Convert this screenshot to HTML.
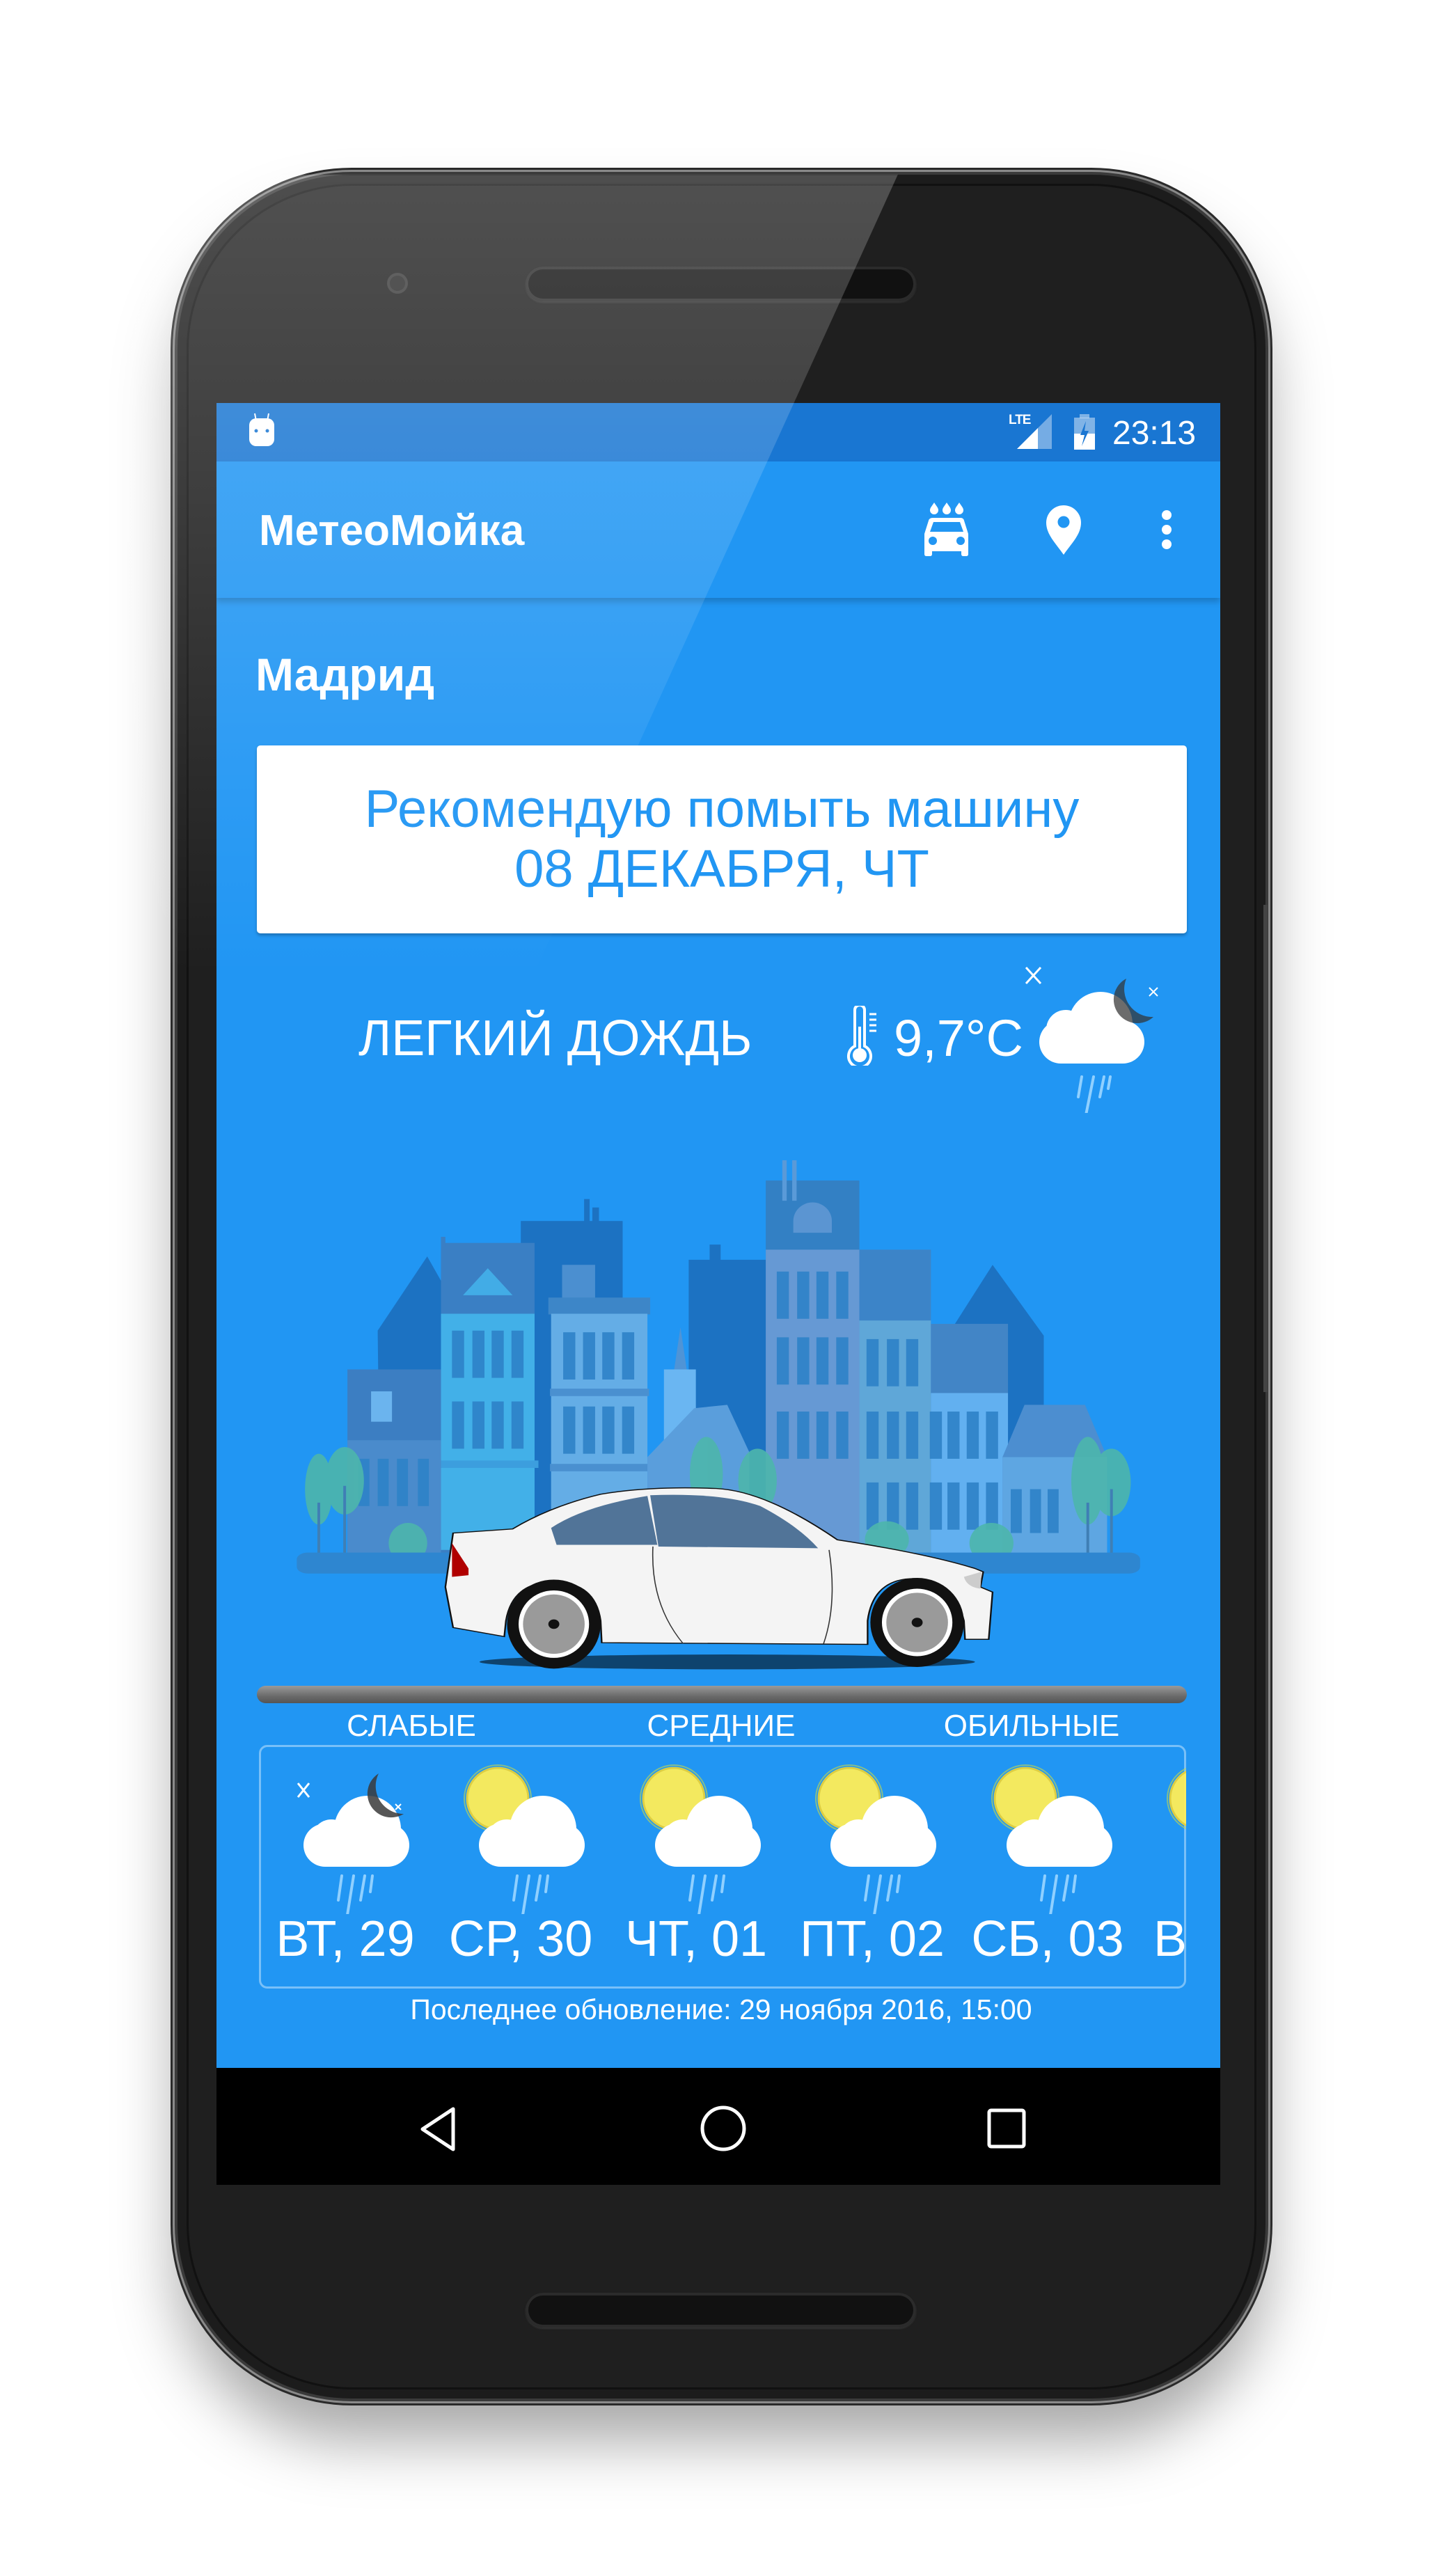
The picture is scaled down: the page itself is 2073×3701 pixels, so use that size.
<!DOCTYPE html>
<html><head><meta charset="utf-8">
<style>
*{margin:0;padding:0;box-sizing:border-box}
html,body{width:2073px;height:3701px;background:#fff;overflow:hidden;font-family:"Liberation Sans",Arial,sans-serif}
.abs{position:absolute}
#phone{left:255px;top:251px;width:1563px;height:3195px;border-radius:250px;background:#1c1c1c;
 box-shadow:0 0 0 4px #3a3a3a,0 0 0 7px #8a8a8a,0 0 0 10px #2a2a2a,0 60px 90px rgba(0,0,0,.35)}
#inner{left:268px;top:264px;width:1537px;height:3169px;border-radius:238px;background:#1f1f1f;box-shadow:inset 0 0 0 3px #111}
.speaker{width:561px;height:50px;border-radius:25px;background:#111;box-shadow:inset 0 0 0 4px #2b2b2b,0 2px 2px #333}
#screen{left:311px;top:579px;width:1442px;height:2392px;background:#2196F3;overflow:hidden}
#status{left:0;top:0;width:1442px;height:84px;background:#1976D2}
#toolbar{left:0;top:84px;width:1442px;height:196px;background:#2196F3;box-shadow:0 6px 8px rgba(0,0,0,.18)}
.w{color:#fff}
#card{left:58px;top:492px;width:1336px;height:270px;background:#fff;border-radius:5px;box-shadow:0 3px 4px rgba(0,0,0,.25);color:#2196F3;text-align:center;font-size:76px;line-height:86px;padding-top:49px}
#nav{left:311px;top:2971px;width:1442px;height:168px;background:#000}
#glare{left:0;top:0;width:2073px;height:3701px;clip-path:polygon(0 0,1404px 0,0 3085px);
 background:linear-gradient(to bottom,rgba(255,255,255,0) 0,rgba(255,255,255,0) 250px,rgba(255,255,255,.22) 252px,rgba(255,255,255,.14) 700px,rgba(255,255,255,.06) 1100px,rgba(255,255,255,0) 1400px);pointer-events:none}
.lbl{font-size:44px;color:#fff;top:2455px;width:400px;text-align:center}
.day{font-size:72px;color:#fff;top:2745px;width:260px;text-align:center}
</style></head><body>
<div id="phone" class="abs"></div>
<div id="inner" class="abs"></div>
<div class="abs speaker" style="left:755px;top:383px"></div>
<div class="abs" style="left:556px;top:392px;width:30px;height:30px;border-radius:50%;background:#2a2a2a;box-shadow:inset 0 0 0 4px #3a3a3a"></div>
<div class="abs speaker" style="left:755px;top:3294px"></div>
<div class="abs" style="left:1815px;top:1300px;width:6px;height:700px;background:#444"></div>

<div id="screen" class="abs">
 <div id="status" class="abs">
  <svg class="abs" style="left:45px;top:14px" width="40" height="50" viewBox="0 0 40 50"><line x1="10" y1="1" x2="12" y2="12" stroke="#fff" stroke-width="2"/><line x1="30" y1="1" x2="28" y2="12" stroke="#fff" stroke-width="2"/><rect x="2" y="8" width="36" height="40" rx="10" fill="#fff"/><circle cx="12" cy="26" r="2.5" fill="#1976D2"/><circle cx="28" cy="26" r="2.5" fill="#1976D2"/></svg>
  <div class="abs w" style="left:1138px;top:14px;font-size:19px;font-weight:bold;letter-spacing:-1px">LTE</div>
  <svg class="abs" style="left:1150px;top:16px" width="52" height="52" viewBox="0 0 52 52"><polygon points="0,50 50,0 50,50" fill="#fff" opacity=".4"/><polygon points="0,50 30,20 30,50" fill="#fff"/></svg>
  <svg class="abs" style="left:1230px;top:16px" width="34" height="52" viewBox="0 0 34 52"><rect x="10" y="0" width="14" height="6" fill="#fff" opacity=".45"/><rect x="2" y="5" width="30" height="46" fill="#fff" opacity=".45"/><rect x="2" y="28" width="30" height="23" fill="#fff"/><polygon points="19,10 11,30 17,30 13,46 23,24 17,24" fill="#1976D2"/></svg>
  <div class="abs w" style="left:1287px;top:16px;font-size:48px">23:13</div>
 </div>
 <div id="toolbar" class="abs">
  <div class="abs w" style="left:61px;top:64px;font-size:62px;font-weight:bold">МетеоМойка</div>
  <svg class="abs" style="left:1017px;top:59px" width="64" height="77" viewBox="0 0 64 77">
   <path d="M14 0 C10 6 8 8 8 11 A6 6 0 0 0 20 11 C20 8 18 6 14 0Z M32 0 C28 6 26 8 26 11 A6 6 0 0 0 38 11 C38 8 36 6 32 0Z M50 0 C46 6 44 8 44 11 A6 6 0 0 0 56 11 C56 8 54 6 50 0Z" fill="#fff"/>
   <path d="M12 22 H52 Q56 22 57 26 L63 45 V74 Q63 77 60 77 H56 Q53 77 53 74 V70 H11 V74 Q11 77 8 77 H3 Q0 77 0 74 V45 L6 26 Q7 22 12 22Z M13 28 L8 42 H56 L51 28Z" fill="#fff" fill-rule="evenodd"/>
   <circle cx="12" cy="55" r="6" fill="#2196F3"/><circle cx="52" cy="55" r="6" fill="#2196F3"/>
  </svg>
  <svg class="abs" style="left:1192px;top:63px" width="50" height="71" viewBox="0 0 50 71"><path d="M25 0 A25 25 0 0 1 50 25 C50 42 36 55 25 71 C14 55 0 42 0 25 A25 25 0 0 1 25 0Z" fill="#fff"/><circle cx="25" cy="24" r="8.5" fill="#2196F3"/></svg>
  <svg class="abs" style="left:1357px;top:70px" width="16" height="60" viewBox="0 0 16 60"><circle cx="8" cy="7" r="7" fill="#fff"/><circle cx="8" cy="28" r="7" fill="#fff"/><circle cx="8" cy="49" r="7" fill="#fff"/></svg>
 </div>
 <div class="abs w" style="left:56px;top:352px;font-size:66px;font-weight:bold">Мадрид</div>
 <div id="card" class="abs">Рекомендую помыть машину<br>08 ДЕКАБРЯ, ЧТ</div>
 <div class="abs w" style="left:204px;top:872px;font-size:72px">ЛЕГКИЙ ДОЖДЬ</div>
 <svg class="abs" style="left:905px;top:866px" width="50" height="86" viewBox="0 0 50 86"><path d="M12 4 A7 7 0 0 1 26 4 V56 A16 16 0 1 1 12 56Z" transform="translate(0,2)" fill="none" stroke="#fff" stroke-width="4"/><rect x="17" y="30" width="4" height="35" fill="#fff"/><circle cx="19" cy="71" r="10" fill="#fff"/><path d="M33 12h10M33 20h10M33 28h10M33 36h10" stroke="#fff" stroke-width="3"/></svg>
 <div class="abs w" style="left:973px;top:870px;font-size:74px">9,7°C</div>
 <svg class="abs" style="left:1160px;top:800px" width="260" height="220" viewBox="0 0 260 220">
  <g fill="#fff"><rect x="22" y="87" width="151" height="62" rx="31"/><circle cx="110" cy="92" r="46"/><circle cx="60" cy="100" r="28"/></g>
  <path d="M147 27 A34 34 0 1 0 186 82 A40 40 0 0 1 147 27Z" fill="#333" opacity=".72"/>
  <path d="M3 11 L24 34 M24 11 L3 34" stroke="#fff" stroke-width="3"/>
  <path d="M180 40 L192 52 M192 40 L180 52" stroke="#fff" stroke-width="2"/>
  <g stroke="#90D0FF" stroke-width="4" stroke-linecap="round"><line x1="88" y1="228" x2="100" y2="168"/><line x1="78" y1="197" x2="83" y2="168"/><line x1="109" y1="197" x2="115" y2="168"/><line x1="121" y1="185" x2="124" y2="168"/></g>
 </svg>
</div>

<svg class="abs" style="left:420px;top:1650px" width="1240" height="760" viewBox="0 0 1568 1568" preserveAspectRatio="none">
 <g fill="#1C72C2">
  <rect x="415" y="215" width="185" height="1000"/><rect x="530" y="150" width="10" height="80"/><rect x="545" y="175" width="12" height="50"/>
  <rect x="720" y="330" width="150" height="880"/><rect x="758" y="285" width="20" height="50"/>
  <polygon points="155,540 245,320 290,450 290,1200 160,1200"/>
  <polygon points="1190,555 1272,345 1365,555 1365,1200 1190,1200"/>
 </g>
 <rect x="270" y="280" width="170" height="920" fill="#3A7FC4"/><rect x="270" y="262" width="8" height="30" fill="#3A7FC4"/>
 <polygon points="310,435 355,355 400,435" fill="#42ACE6"/>
 <rect x="270" y="490" width="170" height="700" fill="#42B0E8"/>
 <rect x="262" y="925" width="185" height="22" fill="#3C9EDE"/>
 <rect x="100" y="655" width="170" height="545" fill="#3C7EC2"/>
 <rect x="100" y="865" width="170" height="335" fill="#4A8BCC"/>
 <rect x="143" y="720" width="38" height="90" fill="#6BB4EE"/>
 <rect x="490" y="345" width="60" height="100" fill="#4B8FD0"/>
 <rect x="465" y="442" width="185" height="50" fill="#3D86C8"/>
 <rect x="470" y="490" width="175" height="700" fill="#64ADE6"/>
 <rect x="468" y="712" width="180" height="22" fill="#4A90D0"/><rect x="468" y="935" width="180" height="22" fill="#4A90D0"/>
 <rect x="860" y="95" width="170" height="1100" fill="#3380C4"/><rect x="890" y="35" width="8" height="120" fill="#5A9AD8"/><rect x="908" y="35" width="8" height="120" fill="#5A9AD8"/>
 <path d="M910 250 V215 A35 55 0 0 1 980 215 V250Z" fill="#5B95D2"/>
 <rect x="860" y="300" width="170" height="900" fill="#6699D4"/>
 <rect x="1030" y="300" width="130" height="900" fill="#3C84C8"/><rect x="1030" y="510" width="130" height="690" fill="#5FA7D8"/>
 <rect x="1160" y="520" width="140" height="680" fill="#4285C6"/><rect x="1160" y="725" width="140" height="475" fill="#62B0F0"/>
 <polygon points="675,860 705,530 735,860" fill="#4F94D6"/><rect x="675" y="655" width="58" height="210" fill="#6AB6F2"/>
 <polygon points="645,915 730,770 790,760 830,900 830,1200 645,1200" fill="#5A9EDC"/>
 <polygon points="1290,915 1330,760 1440,760 1480,915 1480,1200 1290,1200" fill="#4C8ED0"/><rect x="1290" y="915" width="190" height="285" fill="#5EA6E2"/>
 <g fill="#2E82C8" opacity=".9">
  <path d="M290 540h22v140h-22zM327 540h22v140h-22zM362 540h22v140h-22zM398 540h22v140h-22zM290 750h22v140h-22zM327 750h22v140h-22zM362 750h22v140h-22zM398 750h22v140h-22z"/>
  <path d="M492 545h22v140h-22zM528 545h22v140h-22zM563 545h22v140h-22zM599 545h22v140h-22zM492 765h22v140h-22zM528 765h22v140h-22zM563 765h22v140h-22zM599 765h22v140h-22z"/>
  <path d="M880 365h22v140h-22zM917 365h22v140h-22zM952 365h22v140h-22zM988 365h22v140h-22zM880 560h22v140h-22zM917 560h22v140h-22zM952 560h22v140h-22zM988 560h22v140h-22zM880 780h22v140h-22zM917 780h22v140h-22zM952 780h22v140h-22zM988 780h22v140h-22z"/>
  <path d="M1043 565h22v140h-22zM1080 565h22v140h-22zM1115 565h22v140h-22zM1043 780h22v140h-22zM1080 780h22v140h-22zM1115 780h22v140h-22zM1043 990h22v140h-22zM1080 990h22v140h-22zM1115 990h22v140h-22z"/>
  <path d="M1158 780h22v140h-22zM1190 780h22v140h-22zM1225 780h22v140h-22zM1260 780h22v140h-22zM1158 990h22v140h-22zM1190 990h22v140h-22zM1225 990h22v140h-22zM1260 990h22v140h-22z"/>
  <path d="M120 920h20v140h-20zM155 920h20v140h-20zM190 920h20v140h-20zM228 920h20v140h-20zM1305 1010h20v130h-20zM1340 1010h20v130h-20zM1372 1010h20v130h-20z"/>
 </g>
 <g fill="#4DB6AC" opacity=".9">
  <ellipse cx="48" cy="1010" rx="25" ry="105"/><ellipse cx="95" cy="985" rx="35" ry="100"/>
  <ellipse cx="752" cy="965" rx="30" ry="110"/><ellipse cx="845" cy="985" rx="35" ry="95"/>
  <ellipse cx="1445" cy="985" rx="30" ry="130"/><ellipse cx="1488" cy="990" rx="35" ry="100"/>
  <ellipse cx="210" cy="1170" rx="35" ry="60"/><ellipse cx="1270" cy="1170" rx="40" ry="60"/><ellipse cx="1080" cy="1160" rx="40" ry="55"/>
 </g>
 <g stroke="#3F7FB5" stroke-width="5" fill="none"><path d="M48 1200V1050M95 1200V1000M1445 1200V1050M1488 1200V1010"/></g>
 <rect x="8" y="1198" width="1532" height="62" rx="20" fill="#2E86D0"/>
 <ellipse cx="790" cy="1522" rx="450" ry="22" fill="#000" opacity=".55"/>
 <path d="M292 1140 L400 1128 Q470 1060 560 1025 Q650 1000 770 1008 Q860 1015 990 1160 Q1150 1200 1240 1245 L1255 1255 L1250 1300 L1272 1315 L1265 1455 L1222 1455 L1220 1400 Q1200 1275 1130 1275 Q1055 1275 1045 1400 L1045 1470 L562 1465 L560 1400 Q550 1285 475 1285 Q400 1285 388 1400 L385 1447 L292 1420 L278 1300 Z" fill="#F4F4F4" stroke="#111" stroke-width="3"/>
 <path d="M470 1125 Q530 1060 645 1030 L663 1175 L480 1175 Z" fill="#3F668E" opacity=".9"/>
 <path d="M650 1028 Q780 1020 850 1060 Q920 1120 955 1185 L665 1180 Z" fill="#3F668E" opacity=".9"/>
 <path d="M290 1170 L320 1245 L320 1265 L290 1270Z" fill="#B00000"/>
 <path d="M1220 1270 L1252 1255 L1250 1305 Q1225 1300 1220 1270Z" fill="#CCC"/>
 <path d="M655 1180 Q650 1350 710 1468 M975 1190 Q990 1350 965 1468" stroke="#333" stroke-width="2" fill="none"/>
 <ellipse cx="475" cy="1410" rx="85" ry="132" fill="#111"/><ellipse cx="475" cy="1410" rx="64" ry="100" fill="#fff"/><ellipse cx="475" cy="1410" rx="56" ry="88" fill="#9A9A9A"/>
 <ellipse cx="1135" cy="1405" rx="85" ry="132" fill="#111"/><ellipse cx="1135" cy="1405" rx="64" ry="100" fill="#fff"/><ellipse cx="1135" cy="1405" rx="56" ry="88" fill="#9A9A9A"/>
 <g fill="#111"><ellipse cx="475" cy="1410" rx="10" ry="14"/><ellipse cx="1135" cy="1405" rx="10" ry="14"/></g>
</svg>

<div class="abs" style="left:369px;top:2422px;width:1336px;height:25px;border-radius:13px;background:linear-gradient(#9a9a9a,#6a6a6a 60%,#555)"></div>
<div class="abs lbl" style="left:391px">СЛАБЫЕ</div>
<div class="abs lbl" style="left:836px">СРЕДНИЕ</div>
<div class="abs lbl" style="left:1282px">ОБИЛЬНЫЕ</div>
<div class="abs" style="left:372px;top:2507px;width:1332px;height:350px;border:3px solid rgba(255,255,255,.4);border-radius:12px"></div>

<svg width="0" height="0" style="position:absolute">
 <defs>
  <g id="cl"><g fill="#fff"><rect x="0" y="50" width="152" height="62" rx="31"/><circle cx="92" cy="58" r="48"/><circle cx="40" cy="72" r="28"/></g>
  <g stroke="#90D0FF" stroke-width="4" stroke-linecap="round"><line x1="60" y1="200" x2="72" y2="125"/><line x1="50" y1="160" x2="55" y2="125"/><line x1="82" y1="160" x2="88" y2="125"/><line x1="96" y1="148" x2="99" y2="125"/></g></g>
  <g id="sun"><circle cx="0" cy="0" r="44" fill="#FFEE58" stroke="#E8D23A" stroke-width="3" opacity=".95"/><circle cx="0" cy="0" r="48" fill="none" stroke="#C6D94A" stroke-width="2" opacity=".6"/></g>
 </defs>
</svg>
<svg class="abs" style="left:372px;top:2510px" width="1332" height="240" viewBox="0 0 1332 240">
 <path d="M56 52 L72 72 M72 52 L56 72" stroke="#fff" stroke-width="3"/>
 <path d="M196 82 L204 90 M204 82 L196 90" stroke="#fff" stroke-width="2"/>
 <use href="#cl" x="64" y="60"/>
 <path d="M172 38 A34 34 0 1 0 208 96 A40 40 0 0 1 172 38Z" fill="#3a3a3a" opacity=".85"/>
 <use href="#sun" x="343" y="74"/><use href="#cl" x="316" y="60"/>
 <use href="#sun" x="596" y="74"/><use href="#cl" x="569" y="60"/>
 <use href="#sun" x="848" y="74"/><use href="#cl" x="821" y="60"/>
 <use href="#sun" x="1101" y="74"/><use href="#cl" x="1074" y="60"/>
 <use href="#sun" x="1353" y="74"/>
</svg>
<div class="abs day" style="left:366px">ВТ, 29</div>
<div class="abs day" style="left:618px">СР, 30</div>
<div class="abs day" style="left:870px">ЧТ, 01</div>
<div class="abs day" style="left:1123px">ПТ, 02</div>
<div class="abs day" style="left:1375px">СБ, 03</div>
<div class="abs" style="left:1657px;top:2745px;width:47px;overflow:hidden;font-size:72px;color:#fff">В</div>
<div class="abs w" style="left:311px;top:2864px;width:1450px;text-align:center;font-size:41px">Последнее обновление: 29 ноября 2016, 15:00</div>

<div id="nav" class="abs">
 <svg class="abs" style="left:290px;top:55px" width="60" height="66" viewBox="0 0 60 66"><polygon points="50,4 50,62 6,33" fill="none" stroke="#fff" stroke-width="5" stroke-linejoin="round"/></svg>
 <svg class="abs" style="left:693px;top:52px" width="70" height="70" viewBox="0 0 70 70"><circle cx="35" cy="35" r="30" fill="none" stroke="#fff" stroke-width="5"/></svg>
 <svg class="abs" style="left:1105px;top:56px" width="60" height="62" viewBox="0 0 60 62"><rect x="5" y="5" width="50" height="52" rx="3" fill="none" stroke="#fff" stroke-width="5"/></svg>
</div>
<div id="glare" class="abs"></div>
</body></html>
